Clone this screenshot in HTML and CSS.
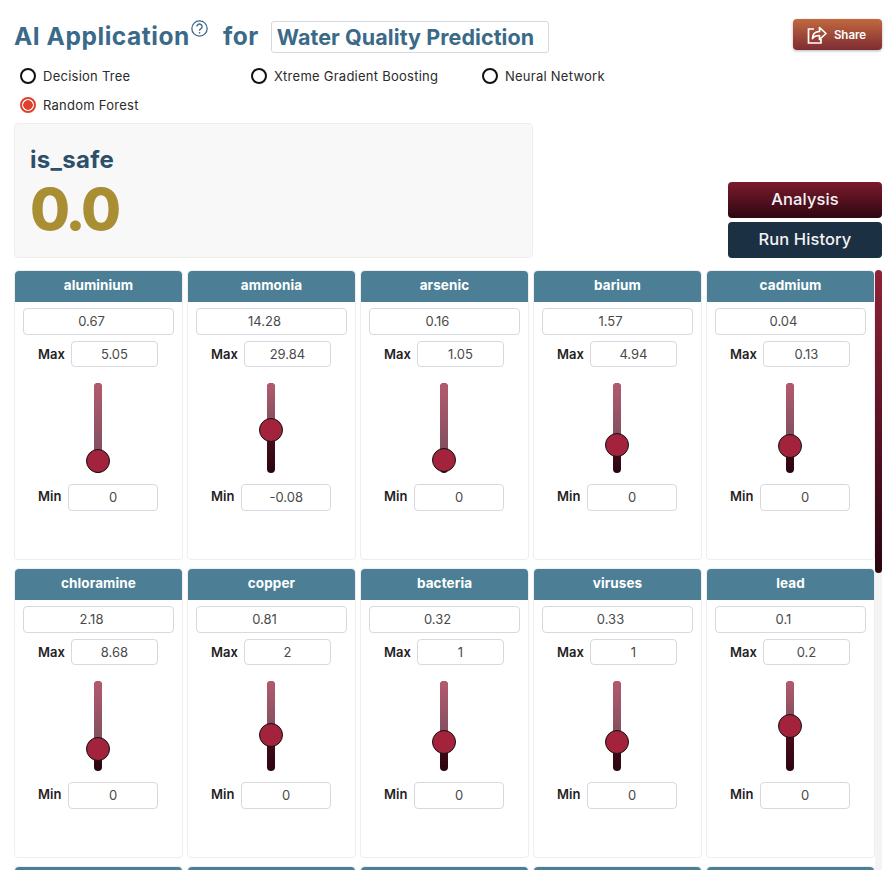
FILE: index.html
```html
<!DOCTYPE html>
<html lang="en">
<head>
<meta charset="utf-8">
<title>AI Application</title>
<link rel="stylesheet" href="styles.css">
</head>
<body>
<header class="top">
  <h1 class="title">AI Application<svg class="help" viewBox="0 0 16 16" width="17" height="17"><circle cx="8" cy="8" r="7.200" fill="none" stroke="#3a6a88" stroke-width="1.200"/><path d="M5.600 6.200a2.400 2.400 0 1 1 3.700 2c-.9.5-1.300 1-1.300 1.900" fill="none" stroke="#3a6a88" stroke-width="1.300"/><circle cx="8" cy="12" r=".8" fill="#3a6a88"/></svg><span class="for">for</span></h1>
  <div class="app-name">Water Quality Prediction</div>
  <button class="share"><svg viewBox="0 0 20 19" width="20" height="19"><path d="M7 4H1.500v14H14v-4" fill="none" stroke="#fff" stroke-width="1.700"/><path d="M5.500 13.500c.1-4.500 3-7 7-7V2.500L19 8.500l-6.500 6v-4c-3 0-5.500.8-7 3z" fill="none" stroke="#fff" stroke-width="1.700" stroke-linejoin="round"/></svg><span>Share</span></button>
</header>

<div class="models">
  <label class="model"><span class="radio"></span>Decision Tree</label>
  <label class="model"><span class="radio"></span>Xtreme Gradient Boosting</label>
  <label class="model"><span class="radio"></span>Neural Network</label>
  <label class="model"><span class="radio on"></span>Random Forest</label>
</div>

<section class="summary">
  <div class="result">
    <div class="result-name">is_safe</div>
    <div class="result-value">0.0</div>
  </div>
  <div class="actions">
    <button class="action analysis">Analysis</button>
    <button class="action history">Run History</button>
  </div>
</section>

<div class="scroll-area">
<main class="scroller">
  <div class="grid">
    <article class="card"><h2>aluminium</h2><div class="field value">0.67</div><div class="limit"><b>Max</b><div class="field">5.05</div></div><div class="slider" style="--pos:78px"><span class="thumb"></span></div><div class="limit low"><b>Min</b><div class="field">0</div></div></article>
    <article class="card"><h2>ammonia</h2><div class="field value">14.28</div><div class="limit"><b>Max</b><div class="field">29.84</div></div><div class="slider" style="--pos:47px"><span class="thumb"></span></div><div class="limit low"><b>Min</b><div class="field">-0.08</div></div></article>
    <article class="card"><h2>arsenic</h2><div class="field value">0.16</div><div class="limit"><b>Max</b><div class="field">1.05</div></div><div class="slider" style="--pos:77px"><span class="thumb"></span></div><div class="limit low"><b>Min</b><div class="field">0</div></div></article>
    <article class="card"><h2>barium</h2><div class="field value">1.57</div><div class="limit"><b>Max</b><div class="field">4.94</div></div><div class="slider" style="--pos:62px"><span class="thumb"></span></div><div class="limit low"><b>Min</b><div class="field">0</div></div></article>
    <article class="card"><h2>cadmium</h2><div class="field value">0.04</div><div class="limit"><b>Max</b><div class="field">0.13</div></div><div class="slider" style="--pos:63px"><span class="thumb"></span></div><div class="limit low"><b>Min</b><div class="field">0</div></div></article>
    <article class="card"><h2>chloramine</h2><div class="field value">2.18</div><div class="limit"><b>Max</b><div class="field">8.68</div></div><div class="slider" style="--pos:68px"><span class="thumb"></span></div><div class="limit low"><b>Min</b><div class="field">0</div></div></article>
    <article class="card"><h2>copper</h2><div class="field value">0.81</div><div class="limit"><b>Max</b><div class="field">2</div></div><div class="slider" style="--pos:54px"><span class="thumb"></span></div><div class="limit low"><b>Min</b><div class="field">0</div></div></article>
    <article class="card"><h2>bacteria</h2><div class="field value">0.32</div><div class="limit"><b>Max</b><div class="field">1</div></div><div class="slider" style="--pos:61px"><span class="thumb"></span></div><div class="limit low"><b>Min</b><div class="field">0</div></div></article>
    <article class="card"><h2>viruses</h2><div class="field value">0.33</div><div class="limit"><b>Max</b><div class="field">1</div></div><div class="slider" style="--pos:61px"><span class="thumb"></span></div><div class="limit low"><b>Min</b><div class="field">0</div></div></article>
    <article class="card"><h2>lead</h2><div class="field value">0.1</div><div class="limit"><b>Max</b><div class="field">0.2</div></div><div class="slider" style="--pos:45px"><span class="thumb"></span></div><div class="limit low"><b>Min</b><div class="field">0</div></div></article>
    <article class="card"><h2></h2></article>
    <article class="card"><h2></h2></article>
    <article class="card"><h2></h2></article>
    <article class="card"><h2></h2></article>
    <article class="card"><h2></h2></article>
  </div>
</main>
<div class="scrollbar"><div class="scrollbar-thumb"></div></div>
</div>
</body>
</html>
```
FILE: styles.css
```css
* { box-sizing: border-box; }
html, body { margin: 0; height: 100%; overflow: hidden; }
body {
  width: 894px;
  padding: 19px 12px 8px 14px;
  background: #fff;
  font-family: Inter, "Open Sans", "Liberation Sans", sans-serif;
  color: #222;
}
.top { display: flex; align-items: flex-start; height: 34px; }
.title {
  margin: 0;
  display: flex;
  align-items: center;
  height: 34px;
  font-size: 24.5px;
  font-weight: 700;
  letter-spacing: .55px;
  color: #3a6a88;
  white-space: nowrap;
}
.help { align-self: flex-start; margin: 1px 0 0 1px; }
.for { margin-left: 15px; }
.app-name {
  margin: 2px 0 0 12px;
  width: 278px;
  height: 32px;
  padding: 0 5px;
  border: 1px solid #d5d8de;
  border-radius: 3px;
  font-size: 21.5px;
  line-height: 30px;
  font-weight: 700;
  letter-spacing: .07px;
  color: #3a6a88;
  white-space: nowrap;
  overflow: hidden;
}
.share {
  margin-left: auto;
  width: 89px;
  height: 31px;
  display: flex;
  align-items: center;
  justify-content: center;
  gap: 7px;
  padding: 0 2px 0 0;
  border: 0;
  border-radius: 4px;
  background: linear-gradient(#c2683f, #7d2c33);
  box-shadow: 0 1px 3px rgba(0,0,0,.3);
  color: #fff;
  font: 600 11.500px Inter, sans-serif;
}
.models {
  display: flex;
  flex-wrap: wrap;
  width: 693px;
  margin: 8px 0 0 6px;
}
.model {
  width: 231px;
  height: 29px;
  display: flex;
  align-items: center;
  gap: 7px;
  font-size: 13px;
  letter-spacing: .25px;
  color: #2b2b2b;
}
.radio {
  width: 16px;
  height: 16px;
  border: 2px solid #111;
  border-radius: 50%;
  background: #fff;
}
.radio.on {
  border-color: #e0412c;
  background: radial-gradient(circle, #e0412c 0 4.500px, #fff 5px);
}
.summary { display: flex; justify-content: space-between; align-items: flex-end; margin-top: 4px; }
.result {
  width: 519px;
  height: 135px;
  padding: 22px 15px 0;
  background: #f8f8f8;
  border: 1px solid #eee;
  border-radius: 4px;
}
.result-name { font-size: 24px; line-height: 28px; font-weight: 700; letter-spacing: .3px; color: #2c4f6c; }
.result-value { font-size: 58px; line-height: 70px; font-weight: 800; letter-spacing: -3px; color: #a98e34; }
.actions { display: flex; flex-direction: column; gap: 4px; width: 154px; }
.action {
  height: 36px;
  padding: 0 0 2px;
  border: 0;
  border-radius: 4px;
  color: #f3f3f3;
  font: 500 16.500px Inter, sans-serif;
  letter-spacing: .1px;
}
.analysis { background: linear-gradient(#7b1a2c, #2e0712); }
.history { background: #1c3044; }
.scroll-area {
  position: relative;
  width: 868px;
  height: 600px;
  margin-top: 12px;
}
.scroller { height: 100%; overflow: hidden; }
.scrollbar {
  position: absolute;
  top: 0;
  right: 0;
  bottom: 0;
  width: 7px;
  background: #f4f4f4;
}
.scrollbar-thumb {
  height: 303px;
  border-radius: 4px;
  background: linear-gradient(#8e2238, #2a0510);
}
.grid {
  display: grid;
  grid-template-columns: repeat(5, 169px);
  column-gap: 4px;
  row-gap: 8px;
}
.card {
  height: 290px;
  padding-right: 1px;
  border: 1px solid #eee;
  border-radius: 4px;
  display: flex;
  flex-direction: column;
  align-items: center;
}
.card h2 {
  align-self: stretch;
  margin: 0 -1px 0 0;
  height: 31px;
  background: #4c7f96;
  border-radius: 4px 4px 0 0;
  color: #fff;
  font-size: 13.500px;
  line-height: 29px;
  font-weight: 700;
  letter-spacing: .1px;
  text-align: center;
}
.field {
  flex: 1;
  height: 26px;
  border: 1px solid #d8d9e0;
  border-radius: 4px;
  background: #fff;
  color: #4a4a4a;
  font-size: 13px;
  line-height: 24px;
  text-align: center;
}
.value { flex: none; width: 151px; height: 27px; margin: 6px 0 0 1px; padding-right: 14px; line-height: 25px; }
.limit { display: flex; align-items: center; gap: 6px; width: 120px; margin-top: 6px; }
.limit b { font-size: 13px; font-weight: 600; color: #1f1f1f; }
.low { gap: 7px; }
.low b { margin-bottom: 3px; }
.low .field { height: 27px; line-height: 24px; }
.slider {
  position: relative;
  width: 8px;
  height: 90px;
  margin: 16px 0 5px;
  border-radius: 4px;
  background: linear-gradient(#7a1a2c, #2a0510);
}
.slider::before {
  content: "";
  position: absolute;
  top: 0;
  left: 0;
  width: 100%;
  height: var(--pos);
  border-radius: 4px 4px 0 0;
  background: linear-gradient(#b35a6e, #7a4f5e);
}
.thumb {
  position: absolute;
  left: -8px;
  top: calc(var(--pos) - 12px);
  width: 24px;
  height: 24px;
  border: 1px solid #111;
  border-radius: 50%;
  background: #a2233b;
}
```
